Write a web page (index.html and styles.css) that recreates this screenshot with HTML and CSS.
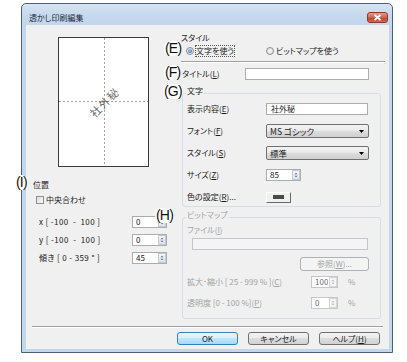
FILE: index.html
```html
<!DOCTYPE html>
<html lang="ja">
<head>
    <meta charset="UTF-8">
    <title>透かし印刷編集</title>
    <link rel="stylesheet" href="styles.css">
</head>
<body>

<div class="window">
    <div class="titlebar">
        <span class="title">透かし印刷編集</span>
        <span class="close">
            <svg width="9" height="7" viewBox="0 0 9 7"><path d="M1.5 1 L7.5 6 M7.5 1 L1.5 6" stroke="#fff" stroke-width="1.8"/></svg>
        </span>
    </div>

    <div class="client">
        <div class="main">
            <!-- left: preview and position -->
            <div class="left">
                <div class="preview"><span class="wm">社外秘</span></div>

                <div class="pos-title">位置</div>
                <div class="check-row"><span class="checkbox"></span>中央合わせ</div>

                <div class="pos-row">
                    <span class="pos-label">x [ -100&nbsp; - &nbsp;100 ]</span>
                    <span class="spin"><span class="spin-val">0</span><span class="spin-btns"><svg width="8" height="10" viewBox="0 0 8 10"><path d="M4 2 L6 4 L2 4 Z M2 6 L6 6 L4 8 Z" fill="#56709a"/></svg></span></span>
                </div>
                <div class="pos-row">
                    <span class="pos-label">y [ -100&nbsp; - &nbsp;100 ]</span>
                    <span class="spin"><span class="spin-val">0</span><span class="spin-btns"><svg width="8" height="10" viewBox="0 0 8 10"><path d="M4 2 L6 4 L2 4 Z M2 6 L6 6 L4 8 Z" fill="#56709a"/></svg></span></span>
                </div>
                <div class="pos-row">
                    <span class="pos-label">傾き [ 0 - 359 ° ]</span>
                    <span class="spin"><span class="spin-val">45</span><span class="spin-btns"><svg width="8" height="10" viewBox="0 0 8 10"><path d="M4 2 L6 4 L2 4 Z M2 6 L6 6 L4 8 Z" fill="#56709a"/></svg></span></span>
                </div>
            </div>

            <!-- right: style, title, text and bitmap groups -->
            <div class="right">
                <div class="style-label">スタイル</div>
                <div class="radios">
                    <span class="radio-item first"><span class="radio on"></span><span class="focus">文字を使う</span></span>
                    <span class="radio-item"><span class="radio"></span>ビットマップを使う</span>
                </div>
                <div class="hr"></div>

                <div class="title-row">
                    <span class="title-label">タイトル(<u>L</u>)</span>
                    <span class="edit title-edit"></span>
                </div>

                <div class="group">
                    <div class="group-title">文字</div>
                    <div class="field">
                        <span class="field-label">表示内容(<u>E</u>)</span>
                        <span class="edit wide">社外秘</span>
                    </div>
                    <div class="field">
                        <span class="field-label">フォント(<u>F</u>)</span>
                        <span class="combo">MS ゴシック<svg width="5" height="3" viewBox="0 0 5 3"><path d="M0 0 L5 0 L2.5 3 Z" fill="#000"/></svg></span>
                    </div>
                    <div class="field">
                        <span class="field-label">スタイル(<u>S</u>)</span>
                        <span class="combo">標準<svg width="5" height="3" viewBox="0 0 5 3"><path d="M0 0 L5 0 L2.5 3 Z" fill="#000"/></svg></span>
                    </div>
                    <div class="field">
                        <span class="field-label">サイズ(<u>Z</u>)</span>
                        <span class="spin"><span class="spin-val">85</span><span class="spin-btns"><svg width="8" height="10" viewBox="0 0 8 10"><path d="M4 2 L6 4 L2 4 Z M2 6 L6 6 L4 8 Z" fill="#56709a"/></svg></span></span>
                    </div>
                    <div class="field">
                        <span class="field-label">色の設定(<u>R</u>)...</span>
                        <span class="color-btn"><span class="swatch"></span></span>
                    </div>
                </div>

                <div class="group bitmap disabled">
                    <div class="group-title">ビットマップ</div>
                    <div class="file-label">ファイル(<u>I</u>)</div>
                    <span class="edit file-edit"></span>
                    <span class="btn browse">参照(<u>W</u>)...</span>
                    <div class="bm-row first">
                        <span class="bm-label">拡大･縮小 [ 25 - 999 % ](<u>C</u>)</span>
                        <span class="spin"><span class="spin-val">100</span><span class="spin-btns"><svg width="8" height="10" viewBox="0 0 8 10"><path d="M4 2 L6 4 L2 4 Z M2 6 L6 6 L4 8 Z" fill="#b4b4b4"/></svg></span></span>
                        <span class="pct">%</span>
                    </div>
                    <div class="bm-row">
                        <span class="bm-label">透明度 [0 - 100 %](<u>P</u>)</span>
                        <span class="spin"><span class="spin-val">0</span><span class="spin-btns"><svg width="8" height="10" viewBox="0 0 8 10"><path d="M4 2 L6 4 L2 4 Z M2 6 L6 6 L4 8 Z" fill="#b4b4b4"/></svg></span></span>
                        <span class="pct">%</span>
                    </div>
                </div>
            </div>
        </div>

        <div class="hr bottom-hr"></div>
        <div class="buttons">
            <span class="btn default">OK</span>
            <span class="btn">キャンセル</span>
            <span class="btn">ヘルプ(<u>H</u>)</span>
        </div>
    </div>

    <!-- callout letters -->
    <span class="mark mark-e">(E)</span>
    <span class="mark mark-f">(F)</span>
    <span class="mark mark-g">(G)</span>
    <span class="mark mark-h">(H)</span>
    <span class="mark mark-i">(I)</span>
</div>

</body>
</html>
```

FILE: styles.css
```css
* {
    box-sizing: border-box;
}

body {
    margin: 0;
    background: #fff;
    font-family: "Noto Sans CJK JP", "Noto Sans", sans-serif;
    font-size: 8px;
    line-height: 10px;
    color: #1a1a1a;
    font-feature-settings: "palt";
}

u {
    text-decoration: underline;
}

.window {
    position: relative;
    margin: 3px 0 0 21px;
    width: 372px;
    height: 350px;
    border: 1px solid #4b5f78;
    border-radius: 5px 5px 0 0;
    background: #c2d6ec;
    padding: 0 3px 3px 4px;
    display: flex;
    flex-direction: column;
}

.titlebar {
    height: 21px;
    margin: 0 -3px 0 -4px;
    padding: 6px 4px 0 7px;
    display: flex;
    align-items: center;
    justify-content: space-between;
    background: linear-gradient(#d6e4f3, #c4d7ed 60%, #c2d6ec);
    border-radius: 5px 5px 0 0;
}

.title {
    color: #1e2b3a;
}

.close {
    width: 21px;
    height: 11px;
    border: 1px solid #8a3a2e;
    border-radius: 3px;
    background: linear-gradient(#e59a8c, #d0624e 50%, #c0402c 55%, #d06a55);
    display: flex;
    align-items: center;
    justify-content: center;
}

.client {
    flex: 1;
    background: #f0f0f0;
    display: flex;
    flex-direction: column;
}

.main {
    display: flex;
    height: 301px;
}

/* left column */
.left {
    width: 154px;
    padding-top: 12px;
}

.preview {
    margin-left: 32px;
    width: 91px;
    height: 130px;
    border: 1px solid #3a3a3a;
    background: #fff;
    position: relative;
    display: flex;
    align-items: center;
    justify-content: center;
}

.preview::before,
.preview::after {
    content: "";
    position: absolute;
}

.preview::before {
    left: 45px;
    top: 0;
    bottom: 0;
    width: 1px;
    background: repeating-linear-gradient(to bottom, #a4a4a4 0 2px, transparent 2px 4px);
}

.preview::after {
    top: 63px;
    left: 0;
    right: 0;
    height: 1px;
    background: repeating-linear-gradient(to right, #a4a4a4 0 2px, transparent 2px 4px);
}

.wm {
    position: relative;
    z-index: 1;
    font-size: 11px;
    color: #6e6e6e;
    letter-spacing: 1px;
    transform: rotate(-45deg);
}

.pos-title {
    margin: 13px 0 0 7px;
}

.check-row {
    margin: 5px 0 0 10px;
    height: 10px;
    display: flex;
    align-items: center;
    gap: 2px;
}

.checkbox {
    width: 8px;
    height: 8px;
    border: 1px solid #8e8f8f;
    background: linear-gradient(135deg, #dcdcdc, #fafafa);
}

.pos-row {
    display: flex;
    align-items: center;
    height: 12px;
    margin: 6px 0 0 13px;
}

.check-row + .pos-row {
    margin-top: 11px;
}

.pos-label {
    width: 93px;
    white-space: pre;
    letter-spacing: 0.4px;
}

/* spin boxes */
.spin {
    display: flex;
    height: 12px;
}

.spin-val {
    width: 25px;
    height: 12px;
    border: 1px solid #abadb3;
    border-right: 0;
    background: #fff;
    padding-left: 3px;
}

.spin-btns {
    width: 10px;
    height: 12px;
    border: 1px solid #abadb3;
    border-left: 0;
    background: #fff;
    display: flex;
    align-items: center;
    justify-content: center;
}

.spin-btns svg {
    background: linear-gradient(#f4f6f9, #dde3ea);
    border: 1px solid #c3cad4;
    width: 8px;
    height: 10px;
}

/* right column */
.right {
    flex: 1;
}

.style-label {
    margin: 8px 0 0 2px;
}

.radios {
    margin-top: 3px;
    height: 10px;
    padding-left: 7px;
    display: flex;
}

.radio-item {
    display: flex;
    align-items: center;
    gap: 2px;
}

.radio-item.first {
    width: 80px;
}

.radio {
    width: 8px;
    height: 8px;
    border: 1px solid #8e8f8f;
    border-radius: 50%;
    background: radial-gradient(#f8f8f8, #d6d6d6);
    display: flex;
    align-items: center;
    justify-content: center;
}

.radio.on::after {
    content: "";
    width: 4px;
    height: 4px;
    border-radius: 50%;
    background: radial-gradient(circle at 40% 35%, #9fd1f7, #1f5fa8);
}

.focus {
    outline: 1px dotted #555;
}

.hr {
    height: 2px;
    border-top: 1px solid #a0a0a0;
    border-bottom: 1px solid #fff;
}

.right > .hr {
    margin: 5px 4px 0 2px;
}

.title-row {
    margin-top: 5px;
    height: 12px;
    padding-left: 3px;
    display: flex;
    align-items: center;
}

.title-label {
    width: 63px;
}

.edit {
    display: block;
    height: 12px;
    border: 1px solid #abadb3;
    background: #fff;
    padding-left: 4px;
}

.title-edit {
    width: 124px;
}

/* group boxes */
.group {
    margin: 13px 8px 0 3px;
    border: 1px solid #d5dfe5;
    border-radius: 3px;
    padding: 0 11px 2px 4px;
}

.group-title {
    display: table;
    margin: -8px 0 0 -1px;
    padding: 0 1px;
    background: #f0f0f0;
}

.field {
    display: flex;
    align-items: center;
    height: 14px;
    margin-top: 8px;
}

.group-title + .field {
    margin-top: 6px;
}

.field-label {
    width: 79px;
}

.edit.wide {
    width: 102px;
}

.combo {
    width: 103px;
    height: 14px;
    border: 1px solid #707070;
    border-radius: 2px;
    background: linear-gradient(#f3f3f3, #ebebeb 45%, #dddddd 50%, #d0d0d0);
    padding: 0 4px 0 3px;
    display: flex;
    align-items: center;
    justify-content: space-between;
    font-size: 8.5px;
}

.color-btn {
    width: 25px;
    height: 11px;
    border: 1px solid;
    border-color: #fdfdfd #6a6a6a #6a6a6a #fdfdfd;
    background: #f0f0f0;
    display: flex;
    align-items: center;
    justify-content: center;
}

.swatch {
    width: 11px;
    height: 4px;
    background: #4a4a4a;
}

.group.bitmap {
    margin-top: 10px;
    padding-bottom: 9px;
}

.disabled {
    color: #a3a3a3;
}

.file-label {
    margin-top: 5px;
}

.file-edit {
    margin: 3px 0 0 5px;
    width: 176px;
    border-color: #c4c7cc;
    background: #f4f4f4;
}

.btn {
    display: flex;
    align-items: center;
    justify-content: center;
    width: 61px;
    height: 13px;
    border: 1px solid #707070;
    border-radius: 3px;
    background: linear-gradient(#f4f4f4, #ebebeb 45%, #dddddd 50%, #d2d2d2);
    color: #1a1a1a;
}

.browse {
    margin: 7px 0 0 auto;
    width: 69px;
    height: 14px;
    border-color: #adb2b5;
    background: #f4f4f4;
    color: #a3a3a3;
}

.bm-row {
    display: flex;
    align-items: center;
    height: 12px;
    margin-top: 9px;
}

.bm-row.first {
    margin-top: 5px;
}

.bm-label {
    width: 124px;
}

.bm-row .spin-val {
    width: 17px;
    border-color: #c4c7cc;
    color: #6a6a6a;
}

.bm-row .spin-btns {
    border-color: #c4c7cc;
}

.bm-row .spin-btns svg {
    background: #f4f4f4;
    border-color: #d6d6d6;
}

.pct {
    margin-left: 10px;
}

/* bottom buttons */
.bottom-hr {
    margin: 0 6px;
}

.buttons {
    margin-top: 4px;
    padding-right: 9px;
    display: flex;
    justify-content: flex-end;
    gap: 10px;
}

.btn.default {
    border-color: #3c7fb1;
    background: linear-gradient(#eaf6fd, #d9f0fc 45%, #bee6fd 50%, #a7d9f5);
}

/* callout letters */
.mark {
    position: absolute;
    font-family: "Liberation Sans", Arial, sans-serif;
    font-size: 14px;
    line-height: 15px;
    letter-spacing: -0.8px;
    color: #111;
    background: #fff;
    border-radius: 7px;
    padding: 0 1px;
}

.mark-e { left: 142px; top: 37px; }
.mark-f { left: 142px; top: 61px; }
.mark-g { left: 141px; top: 80px; }
.mark-h { left: 133px; top: 204px; }
.mark-i { left: -7px; top: 171px; }
```
